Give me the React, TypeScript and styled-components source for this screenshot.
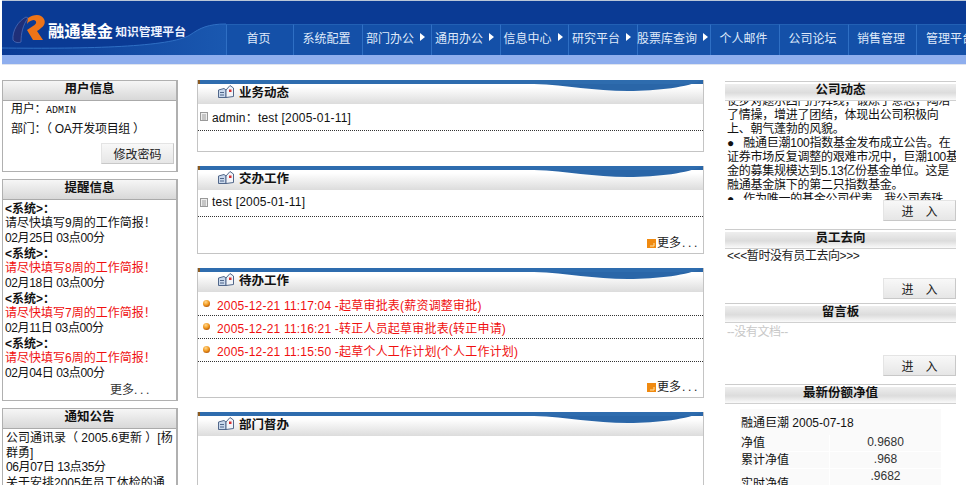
import styled, { createGlobalStyle } from 'styled-components';

const GlobalStyle = createGlobalStyle`
    html, body {
        margin: 0;
        padding: 0;
        background: #fff;
        overflow: hidden;
    }
    body {
        font-family: "Liberation Sans", "Noto Sans CJK SC", sans-serif;
        font-size: 12px;
        color: #111;
    }
`;

const Page = styled.div`
    width: 966px;
    height: 485px;
    overflow: hidden;
`;

const Header = styled.header`
    position: relative;
    height: 55px;
    margin-left: 2px;
    background: #0a3a94;
    border-top: 1px solid #b9c6d8;
    box-sizing: border-box;
    display: flex;
    overflow: hidden;
`;

const Swoosh = styled.svg`
    position: absolute;
    left: 0;
    top: 0;
`;

const Brand = styled.div`
    position: relative;
    width: 224px;
    flex: none;
    display: flex;
    align-items: flex-start;
    padding: 12px 0 0 8px;
    box-sizing: border-box;
`;

const BrandName = styled.span`
    margin-left: 2px;
    margin-top: 8px;
    font-size: 16.3px;
    line-height: 20px;
    font-weight: 700;
    color: #fff;
    white-space: nowrap;
`;

const BrandSub = styled.span`
    margin-left: 2px;
    margin-top: 11px;
    font-size: 11.8px;
    line-height: 16px;
    font-weight: 700;
    color: #eef3ff;
    white-space: nowrap;
`;

const Nav = styled.nav`
    position: relative;
    margin-top: 23px;
    height: 31px;
    display: flex;
    flex: none;
`;

const NavItem = styled.div<{ $width: number }>`
    width: ${p => p.$width}px;
    flex: none;
    box-sizing: border-box;
    border-left: 1px solid #2f6fc4;
    border-top: 1px solid #2260b4;
    background: #1450a8;
    color: #dfe9fa;
    display: flex;
    align-items: center;
    justify-content: center;
    gap: 6px;
    white-space: nowrap;
    padding: 0 3px 6px 0;
`;

const Arrow = styled.i`
    width: 0;
    height: 0;
    flex: none;
    border-left: 5px solid #fff;
    border-top: 4px solid transparent;
    border-bottom: 4px solid transparent;
`;

const SubBar = styled.div`
    height: 10px;
    margin-left: 2px;
    box-sizing: border-box;
    background: #8eaeee;
    border-bottom: 1px solid #dfe4ee;
`;

const Columns = styled.main`
    display: grid;
    grid-template-columns: 176px 507px 233px;
    column-gap: 19px;
    padding: 15px 0 0 2px;
    align-items: start;
`;

const Column = styled.div<{ $gap: number }>`
    display: flex;
    flex-direction: column;
    gap: ${p => p.$gap}px;
`;

const RightColumn = styled.div`
    display: flex;
    flex-direction: column;
    padding: 1px 0 0 2px;
`;

const SideBox = styled.section<{ $height: number }>`
    height: ${p => p.$height}px;
    box-sizing: border-box;
    border: 1px solid #b0b0b0;
    border-width: 1px 2px 1px 1px;
    overflow: hidden;
`;

const SideTitle = styled.h3`
    margin: 0;
    height: 20px;
    line-height: 17px;
    font-size: 12.5px;
    font-weight: 700;
    text-align: center;
    color: #111;
    background: linear-gradient(#f6f6f6, #d8d8d8);
    border-bottom: 1px solid #aaa;
    box-sizing: border-box;
`;

const UserList = styled.div`
    display: flex;
    flex-direction: column;
    gap: 4px;
`;

const UserRow = styled.div`
    padding-left: 8px;
    height: 16px;
    line-height: 16px;
    white-space: nowrap;
    letter-spacing: -0.3px;
`;

const UserCode = styled.span`
    font-family: "Liberation Mono", monospace;
    font-size: 10px;
    letter-spacing: 0;
`;

const Alert = styled.div`
    padding: 2px 0 0 2px;
    height: 45px;
    line-height: 14.3px;
    box-sizing: border-box;
    white-space: nowrap;
`;

const AlertSource = styled.div`
    font-weight: 700;
`;

const AlertText = styled.div<{ $red?: boolean }>`
    color: ${p => (p.$red ? '#f01010' : '#111')};
`;

const AlertDate = styled.div`
    letter-spacing: -0.4px;
`;

const SideMore = styled.div`
    text-align: right;
    padding: 3px 24px 0 0;
    line-height: 14px;
    color: #333;
`;

const Dots = styled.span`
    letter-spacing: 2.7px;
`;

const Notice = styled.div`
    padding: 2px 0 0 3px;
    line-height: 14.5px;
    word-break: break-all;
`;

const NoticeDate = styled.div`
    margin-bottom: 1px;
    letter-spacing: -0.4px;
`;

const ActionRow = styled.div`
    display: flex;
    justify-content: flex-end;
`;

const ActionButton = styled.button<{ $wide?: boolean }>`
    width: 73px;
    height: 21px;
    padding: 0;
    font: inherit;
    color: #222;
    letter-spacing: ${p => (p.$wide ? '1em' : '0')};
    text-indent: ${p => (p.$wide ? '1em' : '0')};
    background: linear-gradient(#f8f8f8, #e6e6e6);
    border: 1px solid #d4d4d4;
    border-color: #e4e4e4 #c8c8c8 #c8c8c8 #e4e4e4;
`;

const UserAction = styled(ActionRow)`
    padding: 6px 2px 0 0;
`;

const Card = styled.section<{ $height: number }>`
    position: relative;
    height: ${p => p.$height}px;
    box-sizing: border-box;
    border: 1px solid #c4c4c4;
    border-top: 0;
    overflow: hidden;
`;

const CardHead = styled.div`
    height: 20px;
    margin-top: 4px;
    padding: 0 0 6px 20px;
    box-sizing: border-box;
    display: flex;
    align-items: center;
    gap: 5px;
    background: linear-gradient(#fff 15%, #dcdcdc);
`;

const CardWave = styled.svg`
    position: absolute;
    left: 0;
    top: 0;
    z-index: 1;
`;

const CardTitle = styled.h3`
    margin: 0;
    font-size: 12.5px;
    font-weight: 700;
    color: #111;
`;

const CardRow = styled.div<{ $height: number }>`
    height: ${p => p.$height}px;
    box-sizing: border-box;
    border-bottom: 1px dotted #333;
    display: flex;
    align-items: center;
    gap: 4px;
    padding: 0 0 2px 2px;
    white-space: nowrap;
    letter-spacing: 0.2px;
`;

const TaskList = styled.div`
    padding-top: 1px;
`;

const TaskRow = styled(CardRow)`
    padding-bottom: 0;
    color: #f01010;
`;

const TaskText = styled.span`
    margin-left: 3px;
`;

const CardMore = styled.div`
    position: absolute;
    right: 3px;
    bottom: 3px;
    display: flex;
    align-items: center;
    gap: 1px;
    color: #222;
    line-height: 14px;
`;

const RightBox = styled.section<{ $height: number }>`
    height: ${p => p.$height}px;
    border-top: 1px solid #ccc;
    padding-top: 2px;
    box-sizing: border-box;
    overflow: hidden;
`;

const RightTitle = styled.h3`
    margin: 0;
    height: 17px;
    line-height: 12px;
    font-size: 12.5px;
    font-weight: 700;
    text-align: center;
    box-sizing: border-box;
    background: linear-gradient(#eee, #dcdcdc 55%, #fafafa);
    border-bottom: 1px solid #d0d0d0;
`;

const NewsClip = styled.div`
    height: 99px;
    overflow: hidden;
    padding-left: 2px;
`;

const NewsText = styled.div`
    margin-top: -7px;
    line-height: 14px;
    white-space: nowrap;
`;

const NewsLine = styled.div`
    letter-spacing: -0.25px;
`;

const RightBody = styled.div<{ $height: number; $muted?: boolean }>`
    height: ${p => p.$height}px;
    box-sizing: border-box;
    line-height: 14px;
    padding: ${p => (p.$muted ? '2px 0 0 2px' : '0 0 0 2px')};
    color: ${p => (p.$muted ? '#c8c8c8' : '#222')};
    letter-spacing: -0.4px;
`;

const FundTable = styled.table`
    width: 201px;
    margin: 5px 0 0 15px;
    border-collapse: collapse;
    font-size: 12px;
    background: #fafafa;
`;

const FundHead = styled.td`
    height: 26px;
    padding: 0 0 2px 1px;
    box-sizing: border-box;
    white-space: nowrap;
`;

const FundLabel = styled.td<{ $tall?: boolean }>`
    width: 88px;
    height: ${p => (p.$tall ? 23 : 16)}px;
    padding: 0 0 0 1px;
    vertical-align: bottom;
    line-height: 15px;
    border-bottom: 1px solid #fff;
`;

const FundValue = styled.td`
    text-align: center;
    padding: 0;
    line-height: 15px;
    vertical-align: top;
    color: #333;
    border-left: 1px solid #fff;
    border-bottom: 1px solid #fff;
`;

function Logo() {
    return (
        <svg width="36" height="32" viewBox="0 0 36 32" style={{ flex: 'none' }}>
            <path d="M16 4C8 8 2 18 3 27C5 30 9 30 11 29C11 20 13 12 18 5Z" fill="#1f2f78" stroke="#5f7fc8" strokeWidth="0.6" />
            <path d="M18 5C22 2 28 1 31 3C36 6 36 12 31 15C30 16 29 17 27 18L33 27L23 27L17 17L23 13C27 11 27 8 24 7C22 7 19 8 17 11Z" fill="#ee7418" />
        </svg>
    );
}

function CardIcon() {
    return (
        <svg width="16" height="13" viewBox="0 0 16 13" style={{ flex: 'none' }}>
            <path d="M0.5 5L6 3.5L8 5V12.5H0.5Z" fill="#c9d8ec" stroke="#51678a" />
            <path d="M8 5L12 0.5L15.5 3V11.5L8 12.5Z" fill="#f2f4f8" stroke="#51678a" />
            <rect x="2" y="7" width="4" height="1" fill="#51678a" />
            <rect x="2" y="9.5" width="4" height="1" fill="#51678a" />
            <rect x="11" y="4.5" width="2.5" height="2.5" fill="#d83030" />
        </svg>
    );
}

function DocIcon() {
    return (
        <svg width="8" height="9" viewBox="0 0 8 9" style={{ flex: 'none' }}>
            <rect x="0.5" y="0.5" width="7" height="8" fill="#eee" stroke="#999" />
            <path d="M2 3H6M2 5H6M2 7H6" stroke="#888" strokeWidth="0.8" />
        </svg>
    );
}

function Bullet() {
    return (
        <svg width="7" height="7" viewBox="0 0 8 8" style={{ flex: 'none', margin: '0 0 1px 3px' }}>
            <defs>
                <radialGradient id="ball" cx="40%" cy="30%" r="70%">
                    <stop offset="0" stopColor="#ffd890" />
                    <stop offset="0.6" stopColor="#f29a20" />
                    <stop offset="1" stopColor="#b85c08" />
                </radialGradient>
            </defs>
            <circle cx="4" cy="4" r="4" fill="url(#ball)" />
        </svg>
    );
}

function MoreIcon() {
    return (
        <svg width="9" height="9" viewBox="0 0 9 9" style={{ flex: 'none' }}>
            <rect width="9" height="9" fill="#f08a10" />
            <path d="M3 7H7V4" stroke="#ffe0a0" fill="none" />
        </svg>
    );
}

function Wave() {
    return (
        <CardWave width="505" height="12" viewBox="0 0 505 12">
            <rect width="505" height="4" fill="#2e6cae" />
            <rect width="2" height="4" fill="#8a5a20" />
            <path d="M336 4C370 5 395 11 430 11C460 11 490 7 505 0V4H336Z" fill="#2a66a8" />
        </CardWave>
    );
}

const navItems = [
    { label: '首页', width: 67 },
    { label: '系统配置', width: 69 },
    { label: '部门办公', width: 69, arrow: true },
    { label: '通用办公', width: 69, arrow: true },
    { label: '信息中心', width: 68, arrow: true },
    { label: '研究平台', width: 69, arrow: true },
    { label: '股票库查询', width: 73, arrow: true },
    { label: '个人邮件', width: 69 },
    { label: '公司论坛', width: 69 },
    { label: '销售管理', width: 68 },
    { label: '管理平台', width: 70 },
];

const alerts = [
    { text: '请尽快填写9周的工作简报！', date: '02月25日  03点00分' },
    { text: '请尽快填写8周的工作简报！', date: '02月18日  03点00分', red: true },
    { text: '请尽快填写7周的工作简报！', date: '02月11日  03点00分', red: true },
    { text: '请尽快填写6周的工作简报！', date: '02月04日  03点00分', red: true },
];

const tasks = [
    '2005-12-21 11:17:04 -起草审批表(薪资调整审批)',
    '2005-12-21 11:16:21 -转正人员起草审批表(转正申请)',
    '2005-12-21 11:15:50 -起草个人工作计划(个人工作计划)',
];

const newsLines = [
    '使步对题示四门序拜线，锻炼了意志，陶冶',
    '了情操，增进了团结，体现出公司积极向',
    '上、朝气蓬勃的风貌。',
    '●\u00a0\u00a0\u00a0融通巨潮100指数基金发布成立公告。在',
    '证券市场反复调整的艰难市况中，巨潮100基',
    '金的募集规模达到5.13亿份基金单位。这是',
    '融通基金旗下的第二只指数基金。',
    '●\u00a0\u00a0\u00a0作为唯一的基金公司代表，我公司泰珠、',
];

export default function App() {
    return (
        <Page>
            <GlobalStyle />
            <Header>
                <Swoosh width="224" height="54" viewBox="2 0 224 54">
                    <defs>
                        <linearGradient id="sw" x1="0" x2="1" y1="0" y2="0">
                            <stop offset="0" stopColor="#0a3a94" />
                            <stop offset="1" stopColor="#1a58b0" />
                        </linearGradient>
                    </defs>
                    <path d="M0 47C90 48 170 46 190 34C200 27 208 23 226 23V54H0Z" fill="url(#sw)" />
                    <path d="M0 47C90 48 170 46 190 34C200 27 208 23 226 23" fill="none" stroke="#2f6fc4" />
                </Swoosh>
                <Brand>
                    <Logo />
                    <BrandName>融通基金</BrandName>
                    <BrandSub>知识管理平台</BrandSub>
                </Brand>
                <Nav>
                    {navItems.map(item => (
                        <NavItem key={item.label} $width={item.width}>
                            {item.label}
                            {item.arrow && <Arrow />}
                        </NavItem>
                    ))}
                </Nav>
            </Header>
            <SubBar />
            <Columns>
                <Column $gap={7}>
                    <SideBox $height={92}>
                        <SideTitle>用户信息</SideTitle>
                        <UserList>
                            <UserRow>用户：<UserCode>ADMIN</UserCode></UserRow>
                            <UserRow>部门：（ OA开发项目组 ）</UserRow>
                        </UserList>
                        <UserAction>
                            <ActionButton>修改密码</ActionButton>
                        </UserAction>
                    </SideBox>
                    <SideBox $height={222}>
                        <SideTitle>提醒信息</SideTitle>
                        {alerts.map(alert => (
                            <Alert key={alert.text}>
                                <AlertSource>&lt;系统&gt;：</AlertSource>
                                <AlertText $red={alert.red}>{alert.text}</AlertText>
                                <AlertDate>{alert.date}</AlertDate>
                            </Alert>
                        ))}
                        <SideMore>更多<Dots>...</Dots></SideMore>
                    </SideBox>
                    <SideBox $height={90}>
                        <SideTitle>通知公告</SideTitle>
                        <Notice>
                            公司通讯录（ 2005.6更新 ）[杨群勇]
                            <NoticeDate>06月07日  13点35分</NoticeDate>
                            关于安排2005年员工体检的通知
                        </Notice>
                    </SideBox>
                </Column>
                <Column $gap={14}>
                    <Card $height={72}>
                        <Wave />
                        <CardHead>
                            <CardIcon />
                            <CardTitle>业务动态</CardTitle>
                        </CardHead>
                        <CardRow $height={27}>
                            <DocIcon />
                            admin：test [2005-01-11]
                        </CardRow>
                    </Card>
                    <Card $height={88}>
                        <Wave />
                        <CardHead>
                            <CardIcon />
                            <CardTitle>交办工作</CardTitle>
                        </CardHead>
                        <CardRow $height={27}>
                            <DocIcon />
                            test [2005-01-11]
                        </CardRow>
                        <CardMore>
                            <MoreIcon />
                            更多<Dots>...</Dots>
                        </CardMore>
                    </Card>
                    <Card $height={130}>
                        <Wave />
                        <CardHead>
                            <CardIcon />
                            <CardTitle>待办工作</CardTitle>
                        </CardHead>
                        <TaskList>
                            {tasks.map(task => (
                                <TaskRow key={task} $height={23}>
                                    <Bullet />
                                    <TaskText>{task}</TaskText>
                                </TaskRow>
                            ))}
                        </TaskList>
                        <CardMore>
                            <MoreIcon />
                            更多<Dots>...</Dots>
                        </CardMore>
                    </Card>
                    <Card $height={90}>
                        <Wave />
                        <CardHead>
                            <CardIcon />
                            <CardTitle>部门督办</CardTitle>
                        </CardHead>
                    </Card>
                </Column>
                <RightColumn>
                    <RightBox $height={148}>
                        <RightTitle>公司动态</RightTitle>
                        <NewsClip>
                            <NewsText>
                                {newsLines.map(line => (
                                    <NewsLine key={line}>{line}</NewsLine>
                                ))}
                            </NewsText>
                        </NewsClip>
                        <ActionRow>
                            <ActionButton $wide>进入</ActionButton>
                        </ActionRow>
                    </RightBox>
                    <RightBox $height={74}>
                        <RightTitle>员工去向</RightTitle>
                        <RightBody $height={29}>&lt;&lt;&lt;暂时没有员工去向&gt;&gt;&gt;</RightBody>
                        <ActionRow>
                            <ActionButton $wide>进入</ActionButton>
                        </ActionRow>
                    </RightBox>
                    <RightBox $height={81}>
                        <RightTitle>留言板</RightTitle>
                        <RightBody $height={32} $muted>--没有文档--</RightBody>
                        <ActionRow>
                            <ActionButton $wide>进入</ActionButton>
                        </ActionRow>
                    </RightBox>
                    <RightBox $height={101}>
                        <RightTitle>最新份额净值</RightTitle>
                        <FundTable>
                            <tbody>
                                <tr>
                                    <FundHead colSpan={2}>融通巨潮 2005-07-18</FundHead>
                                </tr>
                                <tr>
                                    <FundLabel>净值</FundLabel>
                                    <FundValue>0.9680</FundValue>
                                </tr>
                                <tr>
                                    <FundLabel>累计净值</FundLabel>
                                    <FundValue>.968</FundValue>
                                </tr>
                                <tr>
                                    <FundLabel $tall>实时净值</FundLabel>
                                    <FundValue>.9682</FundValue>
                                </tr>
                            </tbody>
                        </FundTable>
                    </RightBox>
                </RightColumn>
            </Columns>
        </Page>
    );
}
